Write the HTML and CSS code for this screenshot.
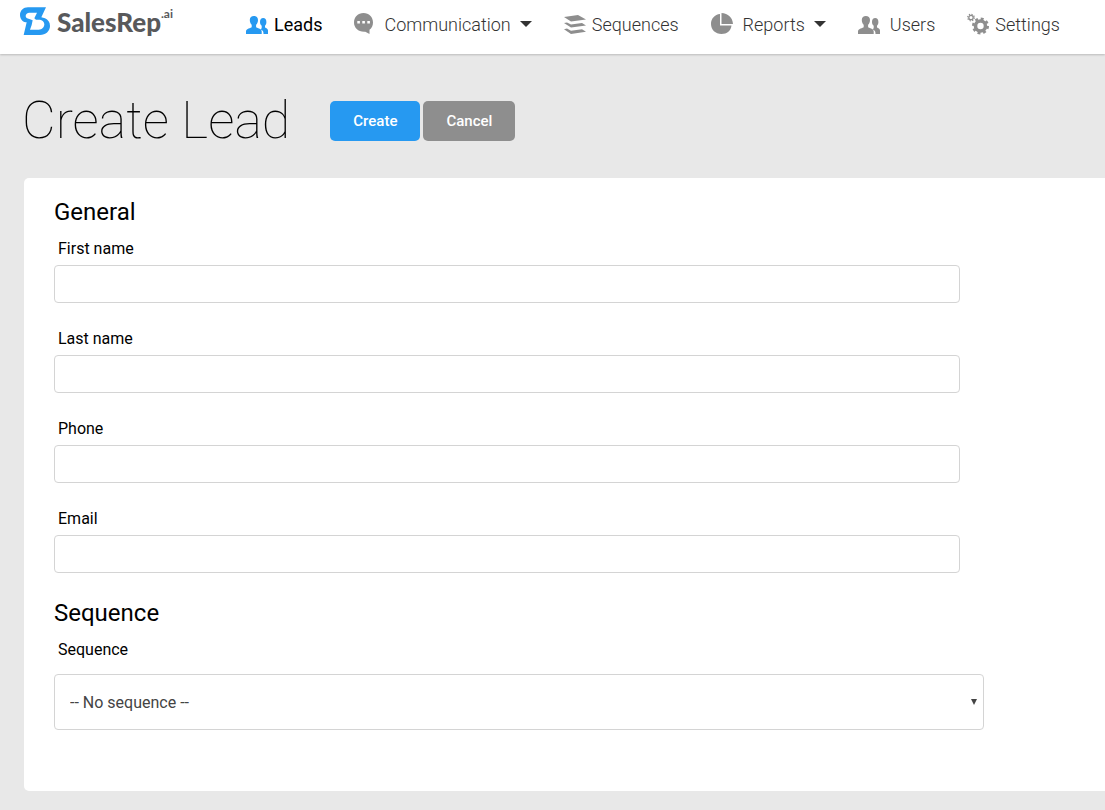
FILE: index.html
```html
<!DOCTYPE html>
<html lang="en">
<head>
    <meta charset="UTF-8">
    <meta name="viewport" content="width=device-width, initial-scale=1.0">
    <title>Create Lead - SalesRep.ai</title>
    <link rel="stylesheet" href="styles.css">
</head>
<body>
    <header class="topbar">
        <a class="logo" href="#">
            <svg class="logo-mark" viewBox="0 0 90 84" aria-hidden="true">
                <path fill="#2699f1" fill-rule="evenodd" d="M78 1H24C10 1 0 11 0 24c0 11 7 20 17 22h3L11 84h49c17 0 30-12 30-27 0-11-6-19-15-23L64 31zM51 17L43 34l5 4h8c10 0 17 6 17 14 0 9-7 16-17 16H30l5-14 3-14-10-4c-7-1-11-4-11-9 0-6 5-10 11-10z"/>
            </svg>
            <span class="logo-text">SalesRep</span><span class="logo-suffix">.ai</span>
        </a>
        <nav class="nav">
            <a class="nav-item active" href="#">
                <svg class="icon" viewBox="0 0 22 22" aria-hidden="true">
                    <path d="M14 9c0-2.500 1.200-4 3.200-4s3.200 1.500 3.200 4c0 1.700-.6 3-1.400 3.800v1.600c1.600.9 3 1.300 3 3V21h-4.500c0-2.600-.5-3.600-3-4.800.9-.4 1.200-1 1.200-1.800v-1.600C14.600 12 14 10.700 14 9zM3.800 7C3.800 4.200 5.500 3 7.900 3S12 4.200 12 7c0 2.200-.8 3.800-1.900 4.800v2.400c3 1.400 5.600 1.800 5.600 4.300V21H0v-2.500c0-2.500 2.800-2.900 5.700-4.300v-2.400C4.600 10.800 3.800 9.200 3.800 7z"/>
                </svg>
                <span>Leads</span>
            </a>
            <a class="nav-item wide" href="#">
                <svg class="icon small" viewBox="0 0 20 22" aria-hidden="true">
                    <path fill-rule="evenodd" d="M9.500 0C15 0 19 4 19 9.500c0 3.300-1.300 5.800-3.500 7.300V21l-4.200-2.300C4.600 19.300 0 15 0 9.500 0 4 4 0 9.500 0zM3.300 8v2.600h2.600V8zm5 0v2.600h2.600V8zm5 0v2.600h2.600V8z"/>
                </svg>
                <span>Communication</span>
                <i class="caret"></i>
            </a>
            <a class="nav-item" href="#">
                <svg class="icon" viewBox="0 0 22 22" aria-hidden="true">
                    <path d="M0 4l14-2 8 4.500L7 8.500zM0 10l3-.6 4 2.200 11-1.600 4 2.500-15 2zM0 16.200l3-.6 4 2.200 11-1.600 4 2.500L7 21z"/>
                </svg>
                <span>Sequences</span>
            </a>
            <a class="nav-item wide" href="#">
                <svg class="icon" viewBox="0 0 22 22" aria-hidden="true">
                    <path d="M9 1v11.500h11.500C20 17.500 16 21 10.500 21 4.500 21 0 16.800 0 11 0 5.500 3.800 1.500 9 1z"/>
                    <path d="M10.500 0C17 .3 21.500 4.500 22 11H10.500z"/>
                </svg>
                <span>Reports</span>
                <i class="caret"></i>
            </a>
            <a class="nav-item wide" href="#">
                <svg class="icon" viewBox="0 0 22 22" aria-hidden="true">
                    <path d="M14 9c0-2.500 1.200-4 3.200-4s3.200 1.500 3.200 4c0 1.700-.6 3-1.400 3.800v1.600c1.600.9 3 1.300 3 3V21h-4.500c0-2.600-.5-3.600-3-4.800.9-.4 1.200-1 1.200-1.800v-1.600C14.600 12 14 10.700 14 9zM3.800 7C3.800 4.200 5.500 3 7.900 3S12 4.200 12 7c0 2.200-.8 3.800-1.900 4.800v2.400c3 1.400 5.600 1.800 5.600 4.300V21H0v-2.500c0-2.500 2.800-2.900 5.700-4.300v-2.400C4.600 10.800 3.800 9.200 3.800 7z"/>
                </svg>
                <span>Users</span>
            </a>
            <a class="nav-item" href="#">
                <svg class="icon gears" viewBox="0 0 22 22" aria-hidden="true">
                    <circle cx="13.500" cy="13" r="5" stroke-width="3.600"/>
                    <circle cx="13.500" cy="13" r="7.300" stroke-width="2.400" stroke-dasharray="2.900 2.833"/>
                    <circle cx="4" cy="4.500" r="2.200" stroke-width="1.300"/>
                    <circle cx="4" cy="4.500" r="3.300" stroke-width="1.200" stroke-dasharray="1.300 1.292"/>
                </svg>
                <span>Settings</span>
            </a>
        </nav>
    </header>

    <main>
        <form id="leadForm">
            <div class="page-head">
                <h1>Create Lead</h1>
                <div class="actions">
                    <button class="btn btn-primary" type="submit">Create</button>
                    <button class="btn btn-secondary" type="button">Cancel</button>
                </div>
            </div>

            <div class="panel">
                <h2>General</h2>
                <div class="field">
                    <label for="firstName">First name</label>
                    <input type="text" id="firstName" name="firstName">
                </div>
                <div class="field">
                    <label for="lastName">Last name</label>
                    <input type="text" id="lastName" name="lastName">
                </div>
                <div class="field">
                    <label for="phone">Phone</label>
                    <input type="tel" id="phone" name="phone">
                </div>
                <div class="field">
                    <label for="email">Email</label>
                    <input type="email" id="email" name="email">
                </div>

                <h2>Sequence</h2>
                <div class="field field-select">
                    <label for="sequence">Sequence</label>
                    <select id="sequence" name="sequence">
                        <option>-- No sequence --</option>
                    </select>
                </div>
            </div>
        </form>
    </main>
</body>
</html>
```
FILE: styles.css
```css
* {
    box-sizing: border-box;
}

body {
    margin: 0;
    background-color: #e8e8e8;
    font-family: Roboto, sans-serif;
    font-size: 16px;
    color: #000;
}

/* Top bar */
.topbar {
    display: flex;
    align-items: flex-start;
    height: 54px;
    padding-left: 20px;
    background-color: #fff;
    box-shadow: 0 1px 2px rgba(0, 0, 0, 0.2);
}

.logo {
    display: flex;
    flex: none;
    width: 226px;
    padding-top: 7px;
    color: #58595b;
    font-family: Lato, sans-serif;
    font-weight: 900;
    text-decoration: none;
}

.logo-mark {
    width: 30px;
    height: 28px;
    margin-right: 7px;
}

.logo-text {
    font-size: 26px;
    line-height: 30px;
}

.logo-suffix {
    font-size: 12px;
    line-height: 14px;
    font-weight: 700;
}

.nav {
    display: flex;
    gap: 32px;
    padding-top: 11px;
}

.nav-item {
    display: flex;
    align-items: center;
    height: 26px;
    color: #333;
    font-size: 18px;
    font-weight: 300;
    text-decoration: none;
    white-space: nowrap;
}

.nav-item.active {
    color: #000;
    font-weight: 400;
}

.icon {
    flex: none;
    width: 22px;
    height: 22px;
    margin-right: 6px;
    fill: #8e8e8e;
}

.wide .icon {
    margin-right: 10px;
}

.icon.small {
    width: 20px;
}

.active .icon {
    fill: #2699f1;
}

.gears {
    fill: none;
    stroke: #8e8e8e;
}

.caret {
    margin-left: 9px;
    border-top: 6px solid #333;
    border-left: 6px solid transparent;
    border-right: 6px solid transparent;
}

/* Page title and buttons */
.page-head {
    display: flex;
    align-items: center;
    gap: 40px;
    height: 124px;
    padding: 10px 24px 0 22px;
}

h1 {
    margin: 0;
    font-size: 52px;
    line-height: 60px;
    font-weight: 100;
}

.actions {
    display: flex;
    gap: 3px;
}

.btn {
    height: 40px;
    padding: 0 23px;
    border: none;
    border-radius: 5px;
    color: #fff;
    font-family: inherit;
    font-size: 15px;
    font-weight: 500;
    cursor: pointer;
}

.btn-primary {
    background-color: #2699f1;
}

.btn-secondary {
    background-color: #8e8e8e;
}

/* Form */
.panel {
    margin: 0 0 20px 24px;
    padding: 20px 121px 61px 30px;
    background-color: #fff;
    border-radius: 5px 0 0 5px;
}

h2 {
    margin: 0 0 13px;
    font-size: 24px;
    line-height: 28px;
    font-weight: 400;
}

.field {
    margin: 0 24px 26px 0;
}

.field label {
    display: block;
    margin: 0 0 6px 4px;
    line-height: 20px;
}

.field input,
.field select {
    display: block;
    width: 100%;
    height: 38px;
    padding: 0 15px;
    border: 1px solid #d4d4d4;
    border-radius: 4px;
    background-color: #fff;
    color: #444;
    font-family: inherit;
    font-size: 16px;
}

.field-select {
    margin: 0;
}

.field-select label {
    margin-bottom: 14px;
}

.field select {
    height: 56px;
    appearance: none;
    background-image: url("data:image/svg+xml,%3Csvg xmlns='http://www.w3.org/2000/svg' width='6' height='6'%3E%3Cpath d='M0 0h6L3 6z' fill='%23444'/%3E%3C/svg%3E");
    background-repeat: no-repeat;
    background-position: right 6px center;
}
```
